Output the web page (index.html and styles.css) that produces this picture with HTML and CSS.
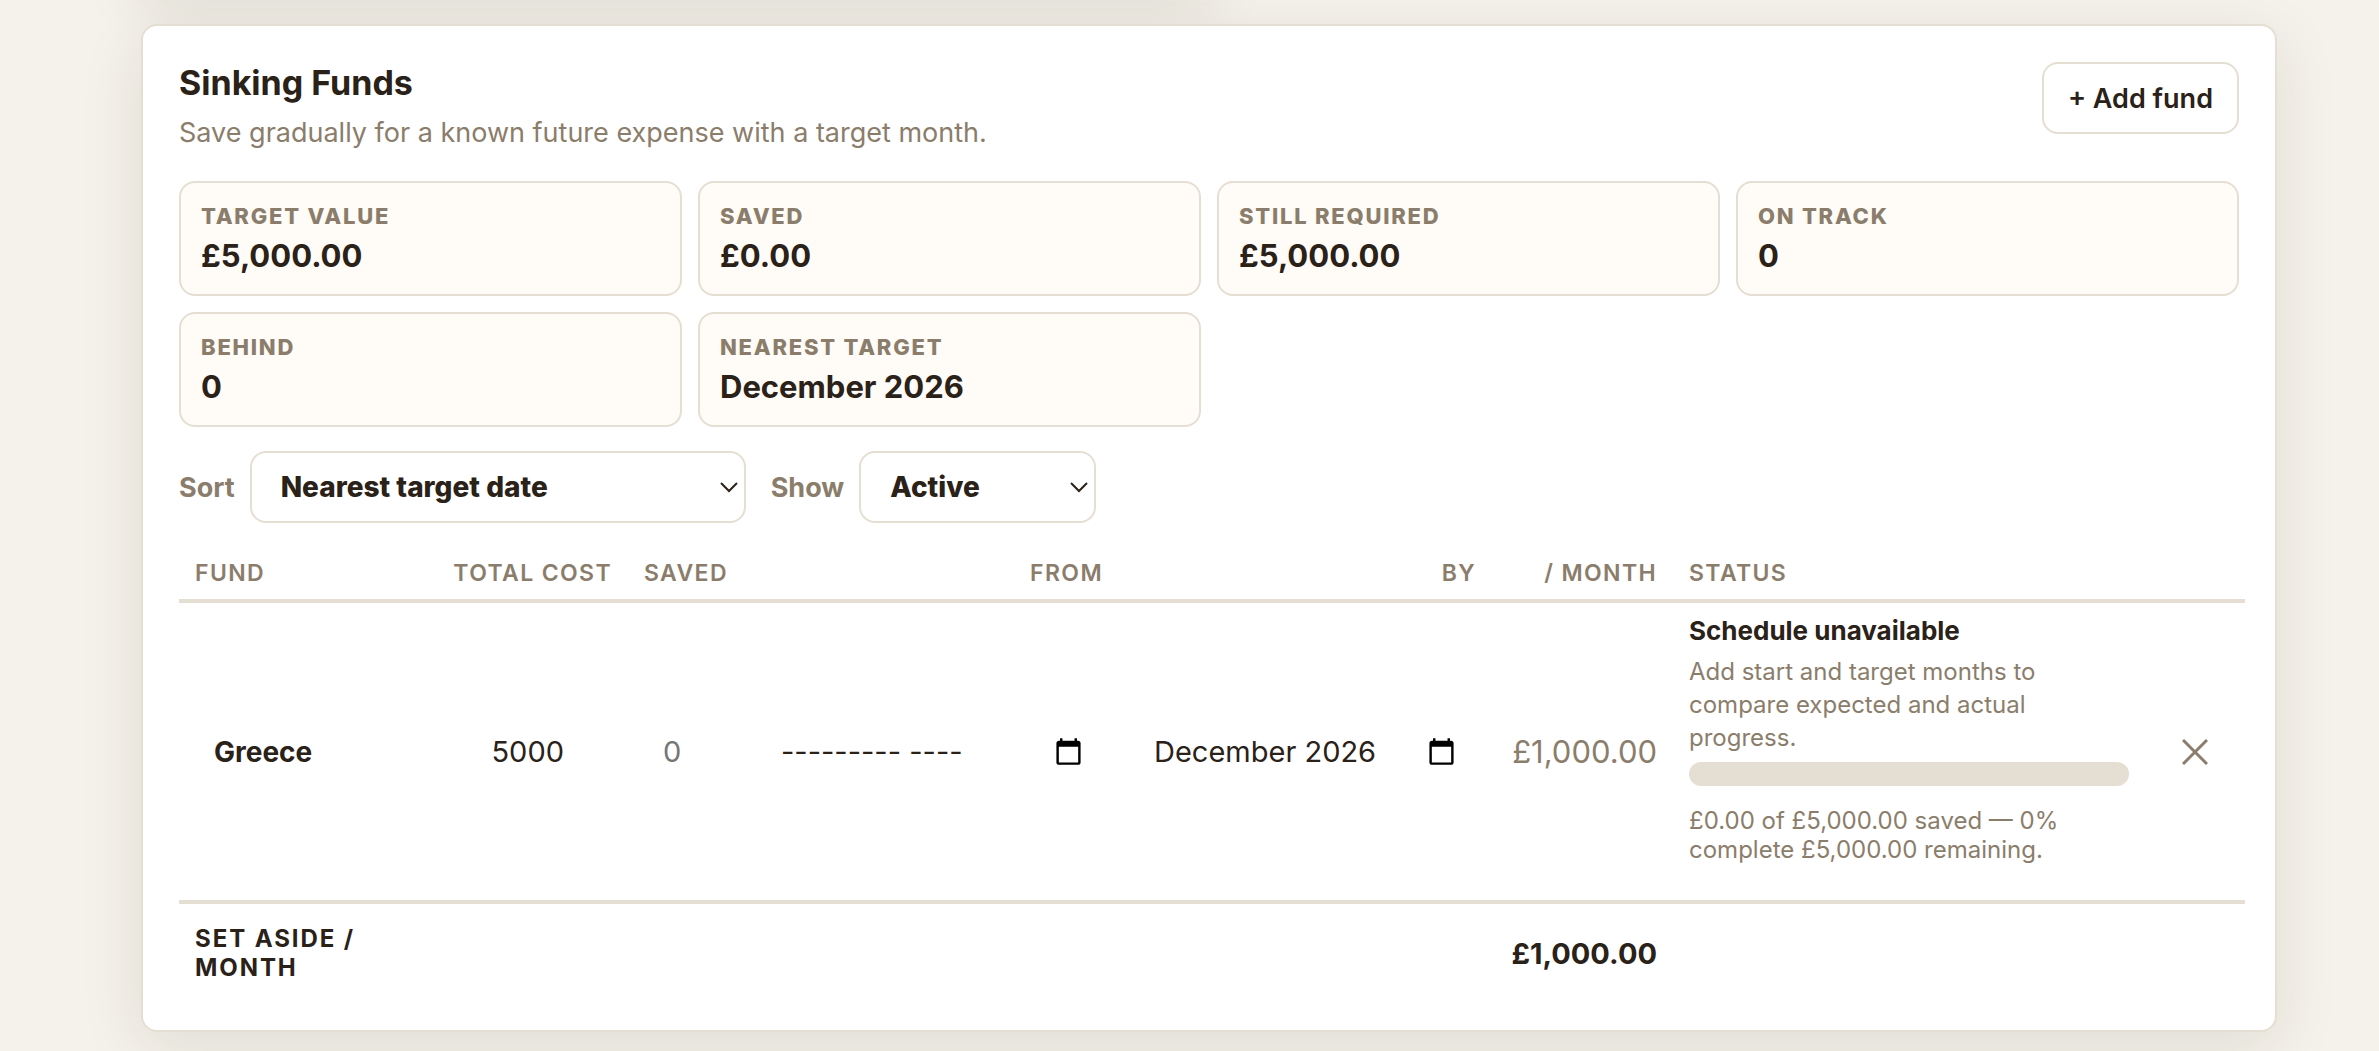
FILE: index.html
```html
<!DOCTYPE html>
<html lang="en">
<head>
    <meta charset="UTF-8">
    <meta name="viewport" content="width=device-width, initial-scale=1.0">
    <title>Sinking Funds</title>
    <link rel="stylesheet" href="styles.css">
</head>
<body>
    <main class="page">
        <div class="card card-prev"></div>

        <section class="card">
            <div class="card-head">
                <div>
                    <h2>Sinking Funds</h2>
                    <p class="subtitle">Save gradually for a known future expense with a target month.</p>
                </div>
                <button type="button" class="btn">+ Add fund</button>
            </div>

            <div class="tiles">
                <div class="tile"><span>Target value</span><strong>£5,000.00</strong></div>
                <div class="tile"><span>Saved</span><strong>£0.00</strong></div>
                <div class="tile"><span>Still required</span><strong>£5,000.00</strong></div>
                <div class="tile"><span>On track</span><strong>0</strong></div>
                <div class="tile"><span>Behind</span><strong>0</strong></div>
                <div class="tile"><span>Nearest target</span><strong>December 2026</strong></div>
            </div>

            <div class="filters">
                <label for="sortBy">Sort</label>
                <div class="select sort">
                    <select id="sortBy">
                        <option>Nearest target date</option>
                        <option>Name</option>
                    </select>
                    <svg viewBox="0 0 20 12" aria-hidden="true"><path d="M2 2l8 8 8-8"/></svg>
                </div>
                <label for="showOnly">Show</label>
                <div class="select show">
                    <select id="showOnly">
                        <option>Active</option>
                        <option>All</option>
                    </select>
                    <svg viewBox="0 0 20 12" aria-hidden="true"><path d="M2 2l8 8 8-8"/></svg>
                </div>
            </div>

            <table class="funds">
                <colgroup>
                    <col>
                    <col class="col-cost">
                    <col class="col-saved">
                    <col class="col-date">
                    <col class="col-date">
                    <col class="col-month">
                    <col class="col-status">
                    <col class="col-remove">
                </colgroup>
                <thead>
                    <tr>
                        <th>Fund</th>
                        <th class="num">Total cost</th>
                        <th>Saved</th>
                        <th class="num">From</th>
                        <th class="num">By</th>
                        <th class="num">/ month</th>
                        <th>Status</th>
                        <th></th>
                    </tr>
                </thead>
                <tbody>
                    <tr>
                        <td><input type="text" class="name" value="Greece" aria-label="Fund name"></td>
                        <td><input type="text" class="cost" inputmode="decimal" value="5000" aria-label="Total cost"></td>
                        <td><input type="text" inputmode="decimal" placeholder="0" aria-label="Saved"></td>
                        <td>
                            <div class="month">
                                <input type="text" value="--------- ----" aria-label="From">
                                <button type="button" aria-label="Pick start month">
                                    <svg viewBox="0 0 24 24" aria-hidden="true"><path d="M20 3h-1V1h-2v2H7V1H5v2H4c-1.1 0-2 .9-2 2v16c0 1.1.9 2 2 2h16c1.1 0 2-.9 2-2V5c0-1.1-.9-2-2-2zm0 18H4V8h16v13z"/></svg>
                                </button>
                            </div>
                        </td>
                        <td>
                            <div class="month">
                                <input type="text" value="December 2026" aria-label="By">
                                <button type="button" aria-label="Pick target month">
                                    <svg viewBox="0 0 24 24" aria-hidden="true"><path d="M20 3h-1V1h-2v2H7V1H5v2H4c-1.1 0-2 .9-2 2v16c0 1.1.9 2 2 2h16c1.1 0 2-.9 2-2V5c0-1.1-.9-2-2-2zm0 18H4V8h16v13z"/></svg>
                                </button>
                            </div>
                        </td>
                        <td class="num amount">£1,000.00</td>
                        <td class="status">
                            <strong>Schedule unavailable</strong>
                            <p>Add start and target months to compare expected and actual progress.</p>
                            <div class="bar"></div>
                            <small>£0.00 of £5,000.00 saved — 0% complete £5,000.00 remaining.</small>
                        </td>
                        <td class="remove">
                            <button type="button" aria-label="Remove fund">
                                <svg viewBox="0 0 26 26" aria-hidden="true"><path d="M1 1l24 24M25 1L1 25"/></svg>
                            </button>
                        </td>
                    </tr>
                </tbody>
                <tfoot>
                    <tr>
                        <td class="total-label">Set aside / month</td>
                        <td colspan="4"></td>
                        <td class="num total">£1,000.00</td>
                        <td colspan="2"></td>
                    </tr>
                </tfoot>
            </table>
        </section>
    </main>
</body>
</html>
```

FILE: styles.css
```css
:root {
    --bg: #f5f2eb;
    --line: #e5dfd3;
    --ink: #2a2118;
    --muted: #8b7d6b;
    --tile: #fffbf6;
}
* {
    box-sizing: border-box;
}
body {
    margin: 0;
    background: var(--bg);
    color: var(--ink);
    font-family: Inter, "Liberation Sans", sans-serif;
    font-size: 27px;
}
.page {
    min-height: 100vh;
    padding: 24px 102px 0 141px;
    overflow: hidden;
}
.card {
    background: #fff;
    border: 2px solid var(--line);
    border-radius: 16px;
    padding: 36px 36px 28px;
    box-shadow: 0 16px 64px rgba(42, 33, 24, 0.1);
}
/* card of the row above, scrolled out of view */
.card-prev {
    width: 50%;
    height: 300px;
    margin: -332px 0 32px;
}
.card-head {
    display: flex;
    justify-content: space-between;
    align-items: flex-start;
    margin-bottom: 28px;
}
h2 {
    margin: 0;
    font-size: 34px;
    line-height: 42px;
    font-weight: 700;
}
.subtitle {
    margin: 8px 0 0;
    color: var(--muted);
    line-height: 41px;
}
.btn {
    height: 72px;
    padding: 0 24px;
    background: #fff;
    border: 2px solid var(--line);
    border-radius: 16px;
    color: var(--ink);
    font: inherit;
    font-weight: 600;
    cursor: pointer;
}
.tiles {
    display: grid;
    grid-template-columns: repeat(4, 1fr);
    gap: 16px;
}
.tile {
    background: var(--tile);
    border: 2px solid var(--line);
    border-radius: 16px;
    padding: 18px 20px;
}
.tile span {
    display: block;
    color: var(--muted);
    font-size: 22px;
    line-height: 30px;
    font-weight: 800;
    letter-spacing: 0.08em;
    text-transform: uppercase;
}
.tile strong {
    display: block;
    margin-top: 4px;
    font-size: 31px;
    line-height: 41px;
}
.filters {
    display: flex;
    align-items: center;
    margin: 24px 0;
}
.filters label {
    margin-right: 15px;
    color: var(--muted);
    font-weight: 700;
}
.select {
    position: relative;
    margin-right: 25px;
}
.sort {
    width: 496px;
}
.show {
    width: 237px;
}
.select select {
    width: 100%;
    height: 72px;
    padding: 0 29px;
    appearance: none;
    background: #fff;
    border: 2px solid var(--line);
    border-radius: 16px;
    color: var(--ink);
    font: inherit;
    font-size: 28px;
    font-weight: 800;
}
.select svg {
    position: absolute;
    right: 7px;
    top: 30px;
    width: 20px;
    height: 12px;
    pointer-events: none;
}
.select path {
    fill: none;
    stroke: var(--ink);
    stroke-width: 2;
}
.funds {
    width: calc(100% + 6px);
    table-layout: fixed;
    border-collapse: collapse;
}
.col-cost {
    width: 192px;
}
.col-month {
    width: 181px;
}
.col-saved {
    width: 118px;
}
.col-date {
    width: 373px;
}
.col-status {
    width: 472px;
}
.col-remove {
    width: 100px;
}
.funds th,
.funds td {
    padding: 12px 16px;
    text-align: left;
}
.funds th {
    height: 54px;
    border-bottom: 4px solid var(--line);
    color: var(--muted);
    font-size: 23px;
    font-weight: 600;
    letter-spacing: 0.06em;
    text-transform: uppercase;
    white-space: nowrap;
}
.funds .num {
    text-align: right;
}
.funds input {
    display: block;
    width: 100%;
    height: 72px;
    padding: 0 17px;
    background: transparent;
    border: 2px solid transparent;
    border-radius: 16px;
    color: var(--ink);
    font: inherit;
    font-size: 29px;
}
.funds input::placeholder {
    color: #757575;
}
.funds .name {
    font-size: 28px;
    font-weight: 700;
}
.funds .cost {
    padding-right: 46px;
    text-align: right;
}
.month {
    display: flex;
    align-items: center;
    padding-right: 20px;
}
.month input {
    flex: 1;
    min-width: 0;
    padding-right: 0;
}
.month button {
    padding: 0;
    background: none;
    border: none;
    cursor: pointer;
}
.month svg {
    display: block;
    width: 29px;
    height: 29px;
}
.funds .amount {
    color: var(--muted);
    font-size: 31px;
}
.funds .status {
    padding-bottom: 36px;
}
.status strong {
    display: block;
    font-size: 26px;
    line-height: 32px;
}
.status p {
    margin: 8px 0;
    color: var(--muted);
    font-size: 24px;
    line-height: 33px;
}
.bar {
    height: 24px;
    margin-bottom: 20px;
    background: var(--line);
    border-radius: 12px;
}
.status small {
    display: block;
    color: var(--muted);
    font-size: 24px;
    line-height: 29px;
}
.remove button {
    display: block;
    margin: 0 auto;
    padding: 0;
    background: none;
    border: none;
    cursor: pointer;
}
.remove svg {
    display: block;
    width: 26px;
    height: 26px;
}
.remove path {
    fill: none;
    stroke: var(--muted);
    stroke-width: 3;
}
.funds tfoot td {
    border-top: 4px solid var(--line);
    padding: 20px 16px;
}
.funds .total-label {
    font-size: 24px;
    line-height: 29px;
    font-weight: 700;
    letter-spacing: 0.08em;
    text-transform: uppercase;
}
.funds .total {
    font-size: 29px;
    font-weight: 700;
}
```
